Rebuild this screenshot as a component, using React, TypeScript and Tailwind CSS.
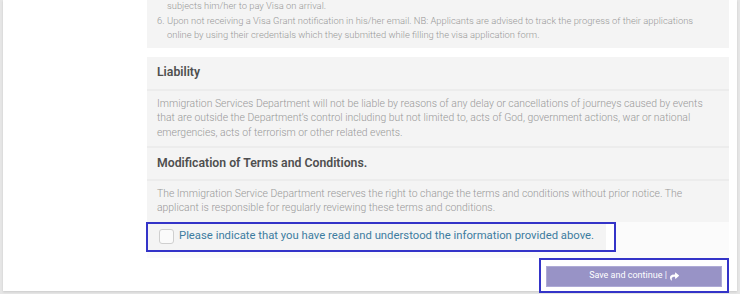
import React from "react";
import { FaShare } from "react-icons/fa";

export default function App() {
  return (
    <div
      className="w-[740px] h-[294px] overflow-hidden bg-[#e6e6e6]"
      style={{ fontFamily: "Roboto, 'Liberation Sans', sans-serif" }}
    >
      <div className="ml-[3px] w-[734px] h-[291px] bg-white shadow-[0_1px_2px_rgba(0,0,0,0.12)]">
        <div className="ml-[144px] w-[582px] flex flex-col">
          {/* top list panel */}
          <div className="-mt-[1px] bg-[#f4f4f4] pb-[5px] pl-[10px] pr-[28px] text-[9.4px] leading-[14.5px] font-light text-[#999999]">
            <div className="pl-[10px]">subjects him/her to pay Visa on arrival.</div>
            <div className="flex">
              <span className="w-[10px] shrink-0">6.</span>
              <span>
                Upon not receiving a Visa Grant notification in his/her email. NB: Applicants are advised to track the progress of their applications online by using their credentials which they submitted while filling the visa application form.
              </span>
            </div>
          </div>

          {/* liability + modification */}
          <div className="mt-[9px] bg-[#f4f4f4]">
            <div className="h-[32px] flex items-center px-[10px] text-[12.25px] font-semibold text-[#4f4f4f]">
              Liability
            </div>
            <div className="border-t-2 border-[#ececec] px-[10px] pt-[6px] pb-[5.5px] text-[10.4px] leading-[14.5px] font-light text-[#999999]">
              Immigration Services Department will not be liable by reasons of any delay or cancellations of journeys caused by events that are outside the Department’s control including but not limited to, acts of God, government actions, war or national emergencies, acts of terrorism or other related events.
            </div>
            <div className="border-t-2 border-[#ececec] h-[33px] flex items-center px-[10px] text-[12.25px] font-semibold text-[#4f4f4f]">
              Modification of Terms and Conditions.
            </div>
            <div className="border-t-2 border-[#ececec] px-[10px] pt-[6px] pb-[7px] text-[10.4px] leading-[14px] font-light text-[#999999]">
              The Immigration Service Department reserves the right to change the terms and conditions without prior notice. The applicant is responsible for regularly reviewing these terms and conditions.
            </div>
          </div>

          {/* checkbox row */}
          <div className="bg-[#fbfbfb] pb-[6px]">
            <div className="-ml-[1px] w-[470px] h-[30px] border-2 border-[#3434c8] bg-white flex">
              <label className="w-[458px] h-full bg-[#f4f4f4] flex items-center pl-[11px] gap-[5px]">
                <span className="w-[15px] h-[15px] rounded-[3px] border border-[#cfcfcf] bg-[#fafafa] shrink-0" />
                <span className="text-[11.3px] text-[#3d7ca0] whitespace-nowrap">
                  Please indicate that you have read and understood the information provided above.
                </span>
              </label>
            </div>
          </div>

          {/* button row */}
          <div className="flex justify-end">
            <div className="w-[190px] h-[35px] border-2 border-[#3434c8] bg-white pl-[5px] pr-[5px] pt-[6px]">
              <button className="w-full h-[21px] bg-[#9893c6] border border-[#aeaad6] text-white text-[9px] flex items-center justify-center gap-[3px]">
                <span>Save and continue |</span>
                <FaShare className="w-[9px] h-[9px]" />
              </button>
            </div>
          </div>
        </div>
      </div>
    </div>
  );
}
